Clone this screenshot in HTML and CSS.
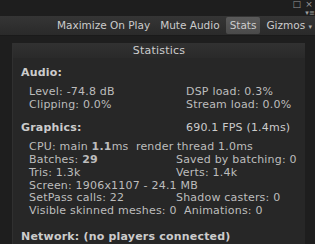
FILE: index.html
```html
<!DOCTYPE html>
<html>
<head>
  <title>Game View Stats</title>
  <link rel="stylesheet" href="styles.css">
</head>
<body>
<div id="window">
  <div class="winbar">
    <span class="winicon">&#9633;</span><span class="winicon">&#215;</span>
  </div>
  <div class="menubar"><span class="menuicon">&#9662;&#8801;</span></div>
  <div class="toolbar">
    <span class="tool">Maximize On Play</span>
    <span class="tool">Mute Audio</span>
    <span class="tool active">Stats</span>
    <span class="tool last">Gizmos <span class="arrow">&#9662;</span></span>
  </div>

  <div class="panel">
    <div class="panel-title">Statistics</div>

    <div class="head">Audio:</div>
    <div class="row two audio">
      <span class="col1">Level: -74.8 dB</span><span>DSP load: 0.3%</span>
    </div>
    <div class="row two audio">
      <span class="col1">Clipping: 0.0%</span><span>Stream load: 0.0%</span>
    </div>

    <div class="head headrow">
      <span class="col0">Graphics:</span><span class="fps">690.1 FPS (1.4ms)</span>
    </div>
    <div class="row">CPU: main <b>1.1</b>ms&nbsp; render thread 1.0ms</div>
    <div class="row two gfx">
      <span class="col1">Batches: <b>29</b></span><span>Saved by batching: 0</span>
    </div>
    <div class="row two gfx">
      <span class="col1">Tris: 1.3k</span><span>Verts: 1.4k</span>
    </div>
    <div class="row">Screen: 1906x1107 - 24.1 MB</div>
    <div class="row two gfx">
      <span class="col1">SetPass calls: 22</span><span>Shadow casters: 0</span>
    </div>
    <div class="row">Visible skinned meshes: 0&nbsp; Animations: 0</div>

    <div class="head net">Network: (no players connected)</div>
  </div>
</div>
</body>
</html>
```

FILE: styles.css
```css
body {
  margin: 0;
  background-color: #1e1e1e;
  font-family: "DejaVu Sans", Verdana, sans-serif;
  font-size: 11px;
  letter-spacing: 0.2px;
  color: #bdbdbd;
  overflow: hidden;
}
#window {
  width: 315px;
  height: 244px;
}
.winbar {
  height: 10px;
  display: flex;
  justify-content: flex-end;
  gap: 4px;
  padding-right: 2px;
  font-size: 9px;
  line-height: 9px;
  color: #9a9a9a;
}
.menubar {
  height: 6px;
  display: flex;
  justify-content: flex-end;
  font-size: 7px;
  line-height: 6px;
  color: #a0a0a0;
}
.toolbar {
  height: 19px;
  display: flex;
  justify-content: flex-end;
  align-items: center;
  gap: 2px;
  background: linear-gradient(#353535, #2a2a2a);
  border-bottom: 1px solid #1a1a1a;
  padding-right: 2px;
  font-size: 10.5px;
  letter-spacing: 0;
  color: #cccccc;
}
.tool {
  padding: 2px 4px 3px 4px;
  white-space: nowrap;
}
.tool.last {padding-right: 1px;}
.tool.active {
  background: linear-gradient(#5a5a5a, #4a4a4a);
  border-radius: 2px;
}
.arrow {font-size: 7px; color: #aaa;}

.panel {
  margin: 7px 10px 0 12px;
  background-color: #272727;
  border-left: 1px solid #303030;
  height: 210px;
  padding-left: 8px;
}
.panel-title {
  text-align: center;
  height: 15px;
  line-height: 15px;
  margin-left: -8px;
  background: linear-gradient(#313131, #2a2a2a);
  color: #cccccc;
}
.head {
  font-weight: bold;
  color: #cccccc;
  margin-top: 8px;
  line-height: 13px;
}
.row {
  padding-left: 8px;
  line-height: 12.7px;
  white-space: nowrap;
}
.row.two {display: flex;}
.row b {font-weight: bold;}
.head + .row {margin-top: 7px;}
.audio .col1 {width: 157px;}
.gfx .col1 {width: 147px;}
.headrow {display: flex; margin-top: 10px;}
.headrow .col0 {width: 165px;}
.fps {font-weight: normal;}
.net {margin-top: 12px;}
```
